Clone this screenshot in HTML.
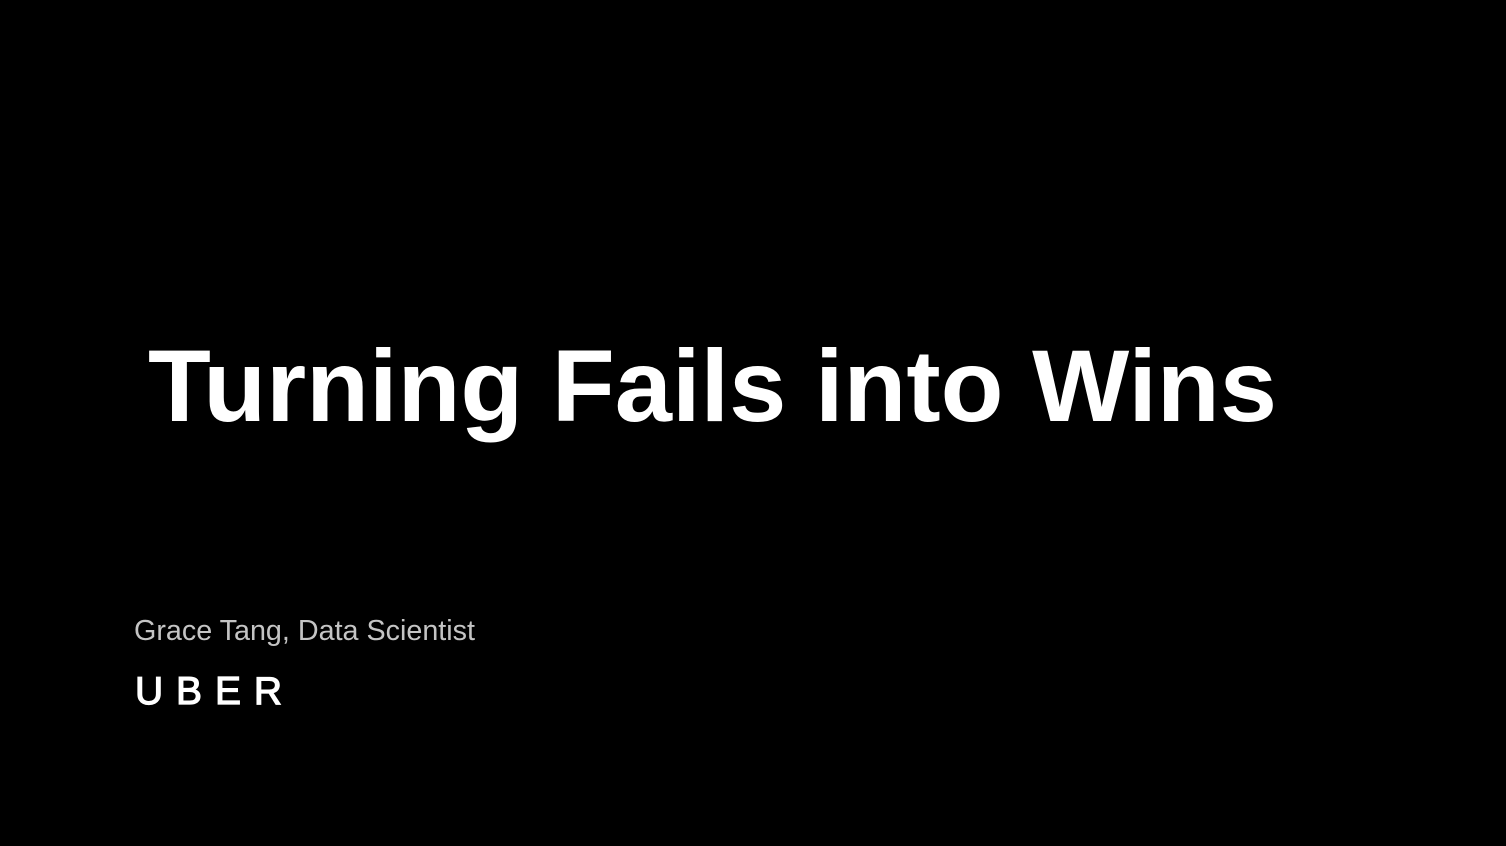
<!DOCTYPE html>
<html><head><meta charset="utf-8"><style>
html,body{margin:0;padding:0;background:#000;width:1506px;height:846px;overflow:hidden}
svg{display:block}
</style></head><body>
<svg width="1506" height="846" viewBox="0 0 1506 846" xmlns="http://www.w3.org/2000/svg">
<rect width="1506" height="846" fill="#000"/>
<text x="148" y="421" font-family="Liberation Sans, sans-serif" font-weight="bold" font-size="102" fill="#fff" textLength="1129" lengthAdjust="spacingAndGlyphs">Turning Fails into Wins</text>
<text x="134" y="640" font-family="Liberation Sans, sans-serif" font-size="29" fill="#c4c4c4" textLength="341" lengthAdjust="spacingAndGlyphs">Grace Tang, Data Scientist</text>
<text x="135" y="704" font-family="Liberation Sans, sans-serif" font-size="39" fill="#fff" stroke="#fff" stroke-width="1.2" textLength="147" lengthAdjust="spacing">UBER</text>
</svg>
</body></html>
